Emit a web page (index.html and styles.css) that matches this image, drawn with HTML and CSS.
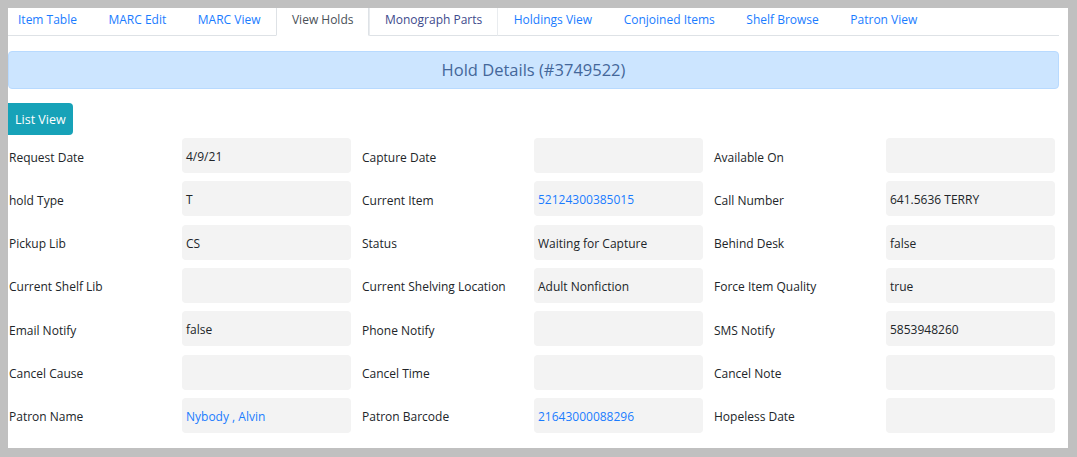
FILE: index.html
```html
<!DOCTYPE html>
<html lang="en">
<head>
    <meta charset="UTF-8">
    <title>Hold Details</title>
    <link rel="stylesheet" href="styles.css">
</head>
<body>
    <div class="panel">
        <!-- Item tabs -->
        <ul class="tabs">
            <li class="tab"><a href="#">Item Table</a></li>
            <li class="tab"><a href="#">MARC Edit</a></li>
            <li class="tab"><a href="#">MARC View</a></li>
            <li class="tab active"><a href="#">View Holds</a></li>
            <li class="tab hover"><a href="#">Monograph Parts</a></li>
            <li class="tab"><a href="#">Holdings View</a></li>
            <li class="tab"><a href="#">Conjoined Items</a></li>
            <li class="tab"><a href="#">Shelf Browse</a></li>
            <li class="tab"><a href="#">Patron View</a></li>
        </ul>

        <div class="banner">Hold Details (#3749522)</div>

        <button class="list-btn">List View</button>

        <div class="fields">
            <div class="field"><span class="label">Request Date</span><span class="value">4/9/21</span></div>
            <div class="field"><span class="label">Capture Date</span><span class="value"></span></div>
            <div class="field"><span class="label">Available On</span><span class="value"></span></div>

            <div class="field"><span class="label">hold Type</span><span class="value">T</span></div>
            <div class="field"><span class="label">Current Item</span><span class="value"><a href="#">52124300385015</a></span></div>
            <div class="field"><span class="label">Call Number</span><span class="value">641.5636 TERRY</span></div>

            <div class="field"><span class="label">Pickup Lib</span><span class="value">CS</span></div>
            <div class="field"><span class="label">Status</span><span class="value">Waiting for Capture</span></div>
            <div class="field"><span class="label">Behind Desk</span><span class="value">false</span></div>

            <div class="field"><span class="label">Current Shelf Lib</span><span class="value"></span></div>
            <div class="field"><span class="label">Current Shelving Location</span><span class="value">Adult Nonfiction</span></div>
            <div class="field"><span class="label">Force Item Quality</span><span class="value">true</span></div>

            <div class="field"><span class="label">Email Notify</span><span class="value">false</span></div>
            <div class="field"><span class="label">Phone Notify</span><span class="value"></span></div>
            <div class="field"><span class="label">SMS Notify</span><span class="value">5853948260</span></div>

            <div class="field"><span class="label">Cancel Cause</span><span class="value"></span></div>
            <div class="field"><span class="label">Cancel Time</span><span class="value"></span></div>
            <div class="field"><span class="label">Cancel Note</span><span class="value"></span></div>

            <div class="field"><span class="label">Patron Name</span><span class="value"><a href="#">Nybody , Alvin</a></span></div>
            <div class="field"><span class="label">Patron Barcode</span><span class="value"><a href="#">21643000088296</a></span></div>
            <div class="field"><span class="label">Hopeless Date</span><span class="value"></span></div>
        </div>
    </div>
</body>
</html>
```

FILE: styles.css
```css
body {
    margin: 0;
    padding: 8px 9px 9px 8px;
    background-color: #c0c0c0;
    font-family: "Open Sans", "Noto Sans", Arial, sans-serif;
    font-size: 12px;
    color: #212529;
}

a {
    color: #1a7cff;
    text-decoration: none;
}

.panel {
    background: #ffffff;
    height: 440px;
    padding-right: 9px;
}

/* Tabs */
.tabs {
    display: flex;
    list-style: none;
    margin: 0;
    padding: 0;
    height: 27px;
    border-bottom: 1px solid #dee2e6;
}

.tab {
    margin-bottom: -1px;
}

.tab a {
    display: block;
    height: 27px;
    line-height: 24px;
    padding: 0 14.5px 0 15px;
    border: 1px solid transparent;
    border-top: none;
}

.tab:first-child a {
    padding-left: 9px;
}

.tab.active a {
    color: #495057;
    background: #ffffff;
    border-color: #dee2e6;
    border-bottom-color: #ffffff;
}

.tab.hover a {
    color: #3d4a8c;
    border-color: #e9ecef;
    border-bottom-color: #dee2e6;
}

/* Banner */
.banner {
    margin-top: 15px;
    height: 36px;
    line-height: 36px;
    text-align: center;
    background: #cce5ff;
    border: 1px solid #b8daff;
    border-radius: 4px;
    color: #44679a;
    font-size: 16.5px;
}

.list-btn {
    display: block;
    margin-top: 14px;
    height: 32px;
    padding: 0 7px;
    background: #17a2b8;
    color: #ffffff;
    border: none;
    border-radius: 0 4px 4px 0;
    font-family: inherit;
    font-size: 12.5px;
}

/* Detail fields */
.fields {
    display: grid;
    grid-template-columns: repeat(3, 352px);
    row-gap: 8.33px;
    margin-top: 3px;
}

.field {
    display: grid;
    grid-template-columns: 174px 169px;
    align-items: center;
}

.label {
    padding: 3px 0 0 1px;
}

.field:nth-child(3n+2) .label,
.field:nth-child(3n) .label {
    padding-left: 2px;
}

.value {
    height: 35px;
    line-height: 37px;
    padding-left: 4px;
    background: #f3f3f3;
    border-radius: 4px;
    white-space: nowrap;
    overflow: hidden;
}
```
